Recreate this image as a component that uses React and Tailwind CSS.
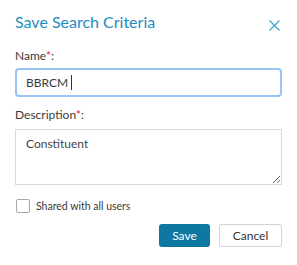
import React from "react";

export default function App() {
  return (
    <div className="w-[297px] h-[265px] bg-white px-[15px] pt-[12px] text-[#3a3a3a] font-['Lato',sans-serif]">
      <div className="flex items-start justify-between">
        <h2 className="text-[16px] leading-[20px] text-[#1d8dc1]">Save Search Criteria</h2>
        <button className="mt-[8px] mr-[2px] text-[#3ba3d2]" title="Close">
          <svg width="11" height="11" viewBox="0 0 11 11" fill="none" stroke="currentColor" strokeWidth="1.2">
            <path d="M0.5 0.5L10.5 10.5M10.5 0.5L0.5 10.5" />
          </svg>
        </button>
      </div>

      <label className="block mt-[16px] text-[12px] leading-[16px]">
        Name<span className="text-[#e0282e]">*</span>:
      </label>
      <div className="mt-[4px] h-[29px] rounded-[4px] border-2 border-[#99c2f5] flex items-center px-[9px] text-[12px]">
        BBRCM
        <span className="ml-[3px] inline-block w-px h-[15px] bg-[#333]" />
      </div>

      <label className="block mt-[10px] text-[12px] leading-[16px]">
        Description<span className="text-[#e0282e]">*</span>:
      </label>
      <textarea
        className="mt-[6px] block w-full h-[56px] border border-[#d9d9d9] px-[10px] py-[6px] text-[12px] leading-[16px] text-[#444] outline-none"
        defaultValue="Constituent"
      />

      <label className="mt-[13px] ml-px flex items-center gap-[6px] text-[10.5px] leading-[16px]">
        <span className="w-[14px] h-[14px] border border-[#a8a8a8] rounded-[2px] bg-white" />
        Shared with all users
      </label>

      <div className="mt-[10px] flex justify-end gap-[9px]">
        <button className="w-[51px] h-[23px] rounded-[3px] bg-[#0e78a3] text-white text-[12px]">Save</button>
        <button className="w-[63px] h-[23px] rounded-[2px] border border-[#d4d4d4] bg-white text-[12px] text-[#333]">Cancel</button>
      </div>
    </div>
  );
}
